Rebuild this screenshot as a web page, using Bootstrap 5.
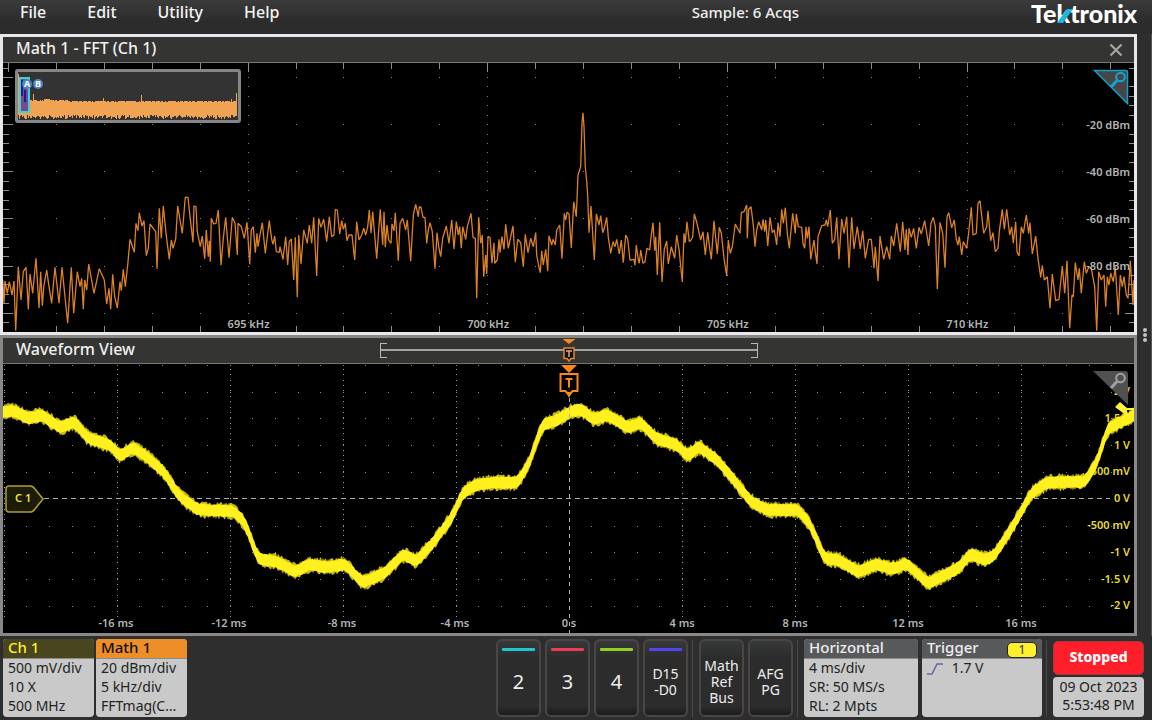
<!DOCTYPE html>
<html lang="en">
<head>
<meta charset="utf-8">
<meta name="viewport" content="width=device-width, initial-scale=1">
<title>Oscilloscope</title>
<link href="https://cdn.jsdelivr.net/npm/bootstrap@5.3.0/dist/css/bootstrap.min.css" rel="stylesheet">
<style>
body{background:#2e2e2e;color:#f0f0f0;font-family:"Noto Sans","Open Sans",sans-serif;font-size:15px;line-height:20px}
button{font-family:inherit}
.topbar{height:34px;background:linear-gradient(#3b3b3b,#2c2c2c 60%);padding:2px 15px 0 20px}
.menu-item{background:none;border:0;padding:0;color:#f4f4f4;font-weight:500;font-size:16px}
.acq{font-size:15px;font-weight:500;margin-right:232px}
.logo{width:106px;height:26px;overflow:visible}
.pane{border:3px solid #8a8786;background:#000;flex:1 1 0;min-height:0}
.pane.active{border-color:#e9e7ec}
.pane-head{height:26px;background:#343433;border-bottom:1px solid #77777a;padding:0 11px 3px 13px}
.pane-title{font-size:16px;font-weight:500}
.pane-close{background:none;border:0;padding:3px 0 0;line-height:0}
.plot{min-height:0;overflow:hidden}
.plot svg.fill-plot{position:absolute;inset:0;width:100%;height:100%}
.tick-label{position:absolute;font-size:11px;line-height:14px;font-weight:600;color:#b4b4b4;white-space:nowrap}
.x-tick{transform:translateX(-50%);bottom:3px}
.fft-x{bottom:1px}
.y-tick{right:4px;transform:translateY(-50%)}
.volt{color:#e6dc32}
.zoom-btn{position:absolute;top:6px;right:5px;width:36px;height:36px;padding:0;border:0;background:none;line-height:0}
.overview{position:absolute;left:12px;top:6px;width:226px;height:54px;border:3px solid #868686;border-radius:3px;background:#333}
.record{width:378px;height:15px;margin-top:3px;border:1px solid #b9b9b5;border-width:0 1px}
.record i{position:absolute;width:6px;height:15px;border:solid #b9b9b5;border-width:1px 0}
.record::after{content:"";position:absolute;left:0;right:0;top:6px;height:2px;background:#a3a39e}
.marker-small{position:absolute;left:50%;top:-4px;transform:translateX(-50%);z-index:2}
.marker-big{position:absolute;left:50%;top:0;transform:translateX(-50%)}
.c1-tag{position:absolute;left:2px;top:50%;transform:translateY(-50%)}
.rail{width:15px;background:#2e2e2e;border-right:1px solid #555;padding-left:2px}
.rail span{width:4px;height:4px;background:#c4c4c4;border-radius:50%}
.bottombar{height:84px;padding:3px 8px 3px 3px}
.info{background:#c9c9c9;color:#222;border-radius:4px;overflow:hidden;font-size:14px;line-height:19px;border:0;padding:0;text-align:left;display:flex;flex-direction:column}
.info-head{height:20px;line-height:17px;font-weight:500;padding:0 5px;width:100%;border-bottom:1px solid #8b8b8b;font-size:15px;flex-shrink:0}
.info-body{padding:0 5px;margin-top:-1px;white-space:nowrap;width:100%;overflow:hidden;text-overflow:ellipsis}
.w-chan{width:91px}.w-hor{width:114px}.w-trig{width:120px}.w-status{width:91px}
.head-ch{background:#48451f;color:#fff02a}
.head-math{background:#ee8e28;color:#111}
.head-gray{background:#58595a;color:#eee}
.scope-btn{width:45px;border:2px solid #4b4643;border-radius:6px;background:linear-gradient(#37393a,#2c2c2c 22%,#2c2c2c 88%,#1c1c1c);color:#eee;padding:7px 0 0;font-size:14px;line-height:16px;position:relative}
.scope-btn b{position:absolute;left:4px;right:4px;top:7px;height:3px;border-radius:1px}
.scope-btn .num{font-size:20px;line-height:22px}
.vsep{width:3px;border-left:1px solid #4c4745;margin-top:1px}
.trig-src{background:#fff02e;color:#333;border:1px solid #222;border-radius:5px;width:30px;height:16px;line-height:13px;font-size:13px;text-align:center;font-weight:400;margin-top:3px}
.stopped{height:34px;background:#ff1f2a;border:1px solid #a3393e;border-radius:5px;color:#fff;font-weight:800;font-size:14px;padding:0 0 2px;margin-top:2px}
.clock{height:40px;background:#c9c9c9;color:#222;border-radius:4px;font-size:14px;line-height:18px;text-align:center;padding-top:1px;white-space:nowrap}
</style>
</head>
<body class="vh-100 d-flex flex-column overflow-hidden">
<header class="topbar d-flex align-items-start flex-shrink-0">
  <nav class="d-flex" style="gap:41px">
    <button class="menu-item">File</button><button class="menu-item">Edit</button><button class="menu-item">Utility</button><button class="menu-item">Help</button>
  </nav>
  <span class="acq ms-auto">Sample: 6 Acqs</span>
  <svg class="logo" viewBox="0 0 106 26" role="img" aria-label="Tektronix">
    <text x="0" y="21" font-family="Lato" font-weight="900" font-size="25" fill="#fff">Tektronix</text>
    <path d="M26 21L36 7H42L32 21Z" fill="#14b8e0"/>
  </svg>
</header>

<div class="d-flex flex-grow-1" style="min-height:0">
<main class="d-flex flex-column flex-grow-1">
  <section class="pane active d-flex flex-column">
    <div class="pane-head d-flex align-items-center justify-content-between">
      <span class="pane-title">Math 1 - FFT (Ch 1)</span>
      <button class="pane-close" aria-label="Close"><svg width="14" height="14"><path d="M1.500 1.500L12.500 12.500M12.500 1.500L1.500 12.500" stroke="#a6a6a6" stroke-width="2.200"/></svg></button>
    </div>
    <div class="plot position-relative flex-grow-1" id="fft">
      <svg class="fill-plot" viewBox="3 63 1131 269" preserveAspectRatio="none"><g id="fftGrid"></g><path id="fftTrace" fill="none" stroke="#dc8225" stroke-width="1.300" stroke-linejoin="bevel"/></svg>
      <div class="overview"><svg class="d-block" width="220" height="48" id="mini"></svg></div>
      <button class="zoom-btn" aria-label="Zoom spectrum"><svg width="36" height="36"><path d="M1.500 1.500H33Q34.500 1.500 34.500 3V34.500Z" fill="#464646" stroke="#149fca" stroke-width="1.500"/><circle cx="27.500" cy="8" r="4.300" fill="none" stroke="#14a5d2" stroke-width="2"/><path d="M24 11.500L18 18" stroke="#14a5d2" stroke-width="3"/></svg></button>
    </div>
  </section>
  <section class="pane d-flex flex-column">
    <div class="pane-head d-flex align-items-center px-0">
      <span class="pane-title flex-fill w-25" style="padding-left:13px">Waveform View</span>
      <div class="record position-relative"><i style="left:0"></i><i style="right:0"></i>
        <svg class="marker-small" width="13" height="24"><path d="M0 0H13L6.500 5Z" fill="#f7891f"/><path d="M1.500 9H11.500V19.500H8.500L6.500 22L4.500 19.500H1.500Z" fill="#111" stroke="#e8842a" stroke-width="1.500"/><path d="M3.500 12H9.500M6.500 12V18" stroke="#d9a878" stroke-width="1.500"/></svg>
      </div>
      <span class="flex-fill w-25"></span>
    </div>
    <div class="plot position-relative flex-grow-1" id="wave">
      <svg class="fill-plot" viewBox="3 364 1131 269" preserveAspectRatio="none"><g id="waveGrid"></g></svg>
      <div id="voltLabels"></div>
      <svg class="fill-plot" viewBox="3 364 1131 269" preserveAspectRatio="none"><path id="waveEdge" fill="#c4b90c"/><path id="waveCore" fill="#fff01e"/><path d="M569.500 398V633" stroke="#aaa" stroke-dasharray="4 4"/><path d="M1115 407L1120 402L1127 408H1134V410H1127V416Z" fill="#fff23a"/></svg>
      <svg class="marker-big" width="20" height="36"><path d="M2 1H18L10 9Z" fill="#f7891f"/><path d="M1.500 10H18.500V27H13.500L10 31L6.500 27H1.500Z" fill="#000" stroke="#f7891f" stroke-width="2"/><path d="M7 28H13L10 34Z" fill="#f7891f"/><path d="M6.500 15H13.500M10 15V23.500" stroke="#f7891f" stroke-width="2"/></svg>
      <svg class="c1-tag" width="40" height="30"><path d="M4 2H25Q28 2 30 5L38 15L30 25Q28 28 25 28H4Q1 28 1 25V5Q1 2 4 2Z" fill="#1c1b08" stroke="#a9a32e" stroke-width="1.500"/><text x="10" y="18" font-size="11" font-weight="600" fill="#f0e53a">C 1</text></svg>
      <button class="zoom-btn" aria-label="Zoom waveform"><svg width="36" height="36"><path d="M0 1H32Q35 1 35 4V35Z" fill="#505050"/><circle cx="27.500" cy="8" r="4.300" fill="none" stroke="#a2a2a2" stroke-width="2"/><path d="M24 11.500L18 18" stroke="#a2a2a2" stroke-width="3"/></svg></button>
    </div>
  </section>
</main>
<aside class="rail d-flex flex-column align-items-center justify-content-center" style="gap:1px"><span></span><span></span><span></span></aside>
</div>

<footer class="bottombar d-flex flex-shrink-0">
  <div class="d-flex" style="gap:2px">
    <button class="info w-chan"><span class="info-head head-ch">Ch 1</span><span class="info-body">500 mV/div<br>10 X<br>500 MHz</span></button>
    <button class="info w-chan"><span class="info-head head-math">Math 1</span><span class="info-body">20 dBm/div<br>5 kHz/div<br>FFTmag(C…</span></button>
  </div>
  <div class="d-flex gap-1 ms-auto">
    <button class="scope-btn"><b style="background:#1fc8cf"></b><span class="num">2</span></button>
    <button class="scope-btn"><b style="background:#ee3b5a"></b><span class="num">3</span></button>
    <button class="scope-btn"><b style="background:#93d120"></b><span class="num">4</span></button>
    <button class="scope-btn"><b style="background:#5244f0"></b>D15<br>-D0</button>
    <span class="vsep"></span>
    <button class="scope-btn">Math<br>Ref<br>Bus</button>
    <button class="scope-btn">AFG<br>PG</button>
    <span class="vsep"></span>
    <button class="info w-hor"><span class="info-head head-gray">Horizontal</span><span class="info-body">4 ms/div<br>SR: 50 MS/s<br>RL: 2 Mpts</span></button>
    <button class="info w-trig"><span class="info-head head-gray d-flex justify-content-between">Trigger<span class="trig-src">1</span></span><span class="info-body"><svg width="17" height="14" class="me-1"><path d="M0 12H5L10 2H16" fill="none" stroke="#6a6796" stroke-width="1.500"/></svg> 1.7 V</span></button>
    <span class="vsep"></span>
    <div class="w-status d-flex flex-column justify-content-between"><button class="stopped">Stopped</button><div class="clock">09 Oct 2023<br>5:53:48 PM</div></div>
  </div>
</footer>

<script src="https://cdn.jsdelivr.net/npm/bootstrap@5.3.0/dist/js/bootstrap.bundle.min.js"></script>
<script>
const $=id=>document.getElementById(id);
let seed=7;const rnd=()=>(seed=(seed*16807)%2147483647)/2147483647;

// Samples are stored per third of the sweep, three units to a plot unit.
const parse=(s,ox,oy)=>s.trim().split(/\s+/).map(p=>{const[a,b]=p.split(',');return[ox+a/3,oy+b/3]});

const fftPts=[
...parse(`8,300 12,370 15,303 22,340 28,305 36,345 42,303 47,452 55,260 63,360 70,275 78,262 85,388 90,282 98,340 108,235 117,384 122,275 127,377 132,315 140,270 147,320 155,370 165,262 177,370 186,262 203,430 214,262 221,400 232,275 240,320 245,295 250,388 254,300 260,330 266,252 282,340 298,266 313,300 320,372 327,325 332,388 338,283 344,350 352,384 360,305 364,332 370,268 376,320 383,255 390,178 403,217 408,130 414,152 418,98 426,138 432,122 439,227 445,205 450,132 467,155 471,266 478,85 484,175 490,78 498,160 508,238 514,180 519,205 527,178 533,78 540,120 547,160 556,52 564,52 570,110 579,187 582,78 588,80 592,155 601,200 607,168 614,236 619,150 625,230 628,182 631,245 634,115 641,132 648,130 655,90 663,256 670,175 677,112 687,233 697,112 705,130 712,225 714,130 724,140 733,175 741,127 749,253 754,150 760,140 766,218 771,160 774,200 781,160 787,128 796,220 808,122 815,178 819,193 824,168 829,215 838,217 840,200 849,238 857,170 863,255 868,185 874,177 881,300 886,172 892,352 896,165 903,252 911,150 922,190 928,135 935,190 941,112 950,288 956,115 963,142 971,118 980,185 988,110 995,170 1002,165 1006,88 1012,90 1019,162 1025,122 1030,148 1036,130 1041,182 1047,165 1056,165 1064,240 1070,125 1077,180 1085,165 1091,145 1097,165 1103,140 1108,90 1113,160 1118,95 1130,236 1136,150 1141,88 1148,195`,0,180),
...parse(`0,95 4,202 9,135 14,180 21,190 24,132 30,152 34,98 43,242 48,130 56,115 65,150 70,120 80,244 88,105 95,73 103,110 106,80 111,82 117,112 123,112 128,190 133,150 138,128 145,155 153,266 159,158 164,200 170,230 176,175 187,138 195,190 203,120 210,207 217,125 223,165 227,140 232,205 236,140 245,178 250,140 261,100 267,172 274,175 278,355 284,112 290,190 295,165 299,290 305,225 308,282 312,170 318,172 324,250 330,188 332,250 340,240 345,178 348,218 354,170 360,208 365,133 373,205 387,138 394,247 401,178 410,188 418,260 424,163 432,218 440,175 448,200 455,158 458,225 464,258 469,278 473,212 478,255 485,208 491,274 495,167 503,195 507,178 514,195 518,150 527,135 534,236 541,100 545,120 549,97 555,102 562,204 569,65 577,110 582,-15 590,-40 594,-170 597,-202 600,-160 604,-40 609,15 611,50 615,158 621,78 631,240 637,102 645,135 650,107 656,158 661,145 668,112 673,172 680,220 687,185 693,200 698,178 706,222 712,180 718,248 725,165 731,178 738,240 750,238 753,256 757,195 763,240 766,250 770,210 777,250 783,245 789,205 797,210 800,180 807,128 812,212 815,170 820,285 827,127 834,306 841,208 848,183 853,252 862,200 872,235 878,165 885,208 895,306 900,160 904,188 909,125 916,185 921,180 926,170 931,102 939,130 950,180 957,155 964,225 971,157 977,205 982,238 990,122 1000,222 1006,142 1012,160 1020,235 1028,288 1033,180 1039,220 1045,200 1054,132 1068,160 1072,98 1080,95 1088,75 1090,175 1094,88 1101,80 1108,135 1113,200 1118,150 1124,125 1133,150 1137,118 1142,155 1145,120 1151,198`,384,180),
...parse(`0,190 6,112 13,158 19,150 26,195 30,128 36,170 41,88 46,130 52,83 58,160 64,205 74,100 82,160 85,102 91,140 101,142 105,190 110,205 114,140 118,175 123,140 128,238 138,180 142,215 147,252 150,170 161,137 171,135 175,120 179,140 187,90 193,190 200,178 206,112 213,238 221,117 228,160 236,110 243,263 251,112 258,207 268,140 277,207 284,152 292,235 302,178 310,178 318,265 322,200 330,303 336,168 347,238 356,200 365,238 370,168 377,198 386,130 397,215 404,125 411,210 415,148 420,225 423,145 430,172 437,145 445,205 453,142 460,162 470,122 482,198 489,130 496,112 502,140 508,328 516,127 524,160 531,263 537,110 542,98 551,143 559,120 565,178 570,195 574,170 581,225 586,185 596,205 603,150 610,82 615,165 625,160 630,70 636,62 647,160 656,140 660,92 668,182 675,158 682,215 690,205 694,155 703,88 709,148 716,88 725,165 731,140 736,190 743,125 747,215 753,228 760,140 766,160 775,105 782,160 786,128 793,222 803,168 810,235 818,292 823,257 829,300 838,290 846,385 853,282 863,362 873,358 883,258 890,340 897,242 905,445 912,345 916,350 922,248 930,300 934,265 940,340 949,245 955,280 962,262 970,265 980,320 986,452 992,275 1000,300 1008,285 1013,380 1018,290 1023,315 1028,280 1036,305 1042,260 1051,405 1057,285 1063,320 1068,290 1075,345 1080,355 1087,242 1095,375 1098,300`,768,180)];
$('fftTrace').setAttribute('d','M'+fftPts.map(p=>p[0].toFixed(1)+' '+p[1].toFixed(1)).join('L'));

// Spectrum graticule
let ticks='',dots='';
for(let k=-5;k<=18;k++){
  const x=Math.round(247.600+47.930*k)+.5, major=k%5===0;
  ticks+=`M${x} 63V${major?72:69}`;
  if(!major) ticks+=`M${x} 326V332`;
  for(let r=0;r<27;r++) if((major&&k>=0)||r%5===0) dots+=`M${x-.5} ${Math.round(77+9.430*r)+.5}h1`;
}
for(let r=-1;r<28;r++){
  const y=Math.round(77+9.430*r)+.5, m=r%5===0;
  ticks+=`M3 ${y}H${m?13:9}`;
  if(!m||r===25) ticks+=`M${m?1125:1129} ${y}H1134`;
}
$('fftGrid').innerHTML=`<path d="${ticks}" stroke="#8c8c8c"/><path d="${dots}" stroke="#808080"/>`;

// Waveform graticule
let wd='',wm='';
for(let k=-25;k<=25;k++){
  const x=Math.round(568.800+22.600*k)+.5, major=k%5===0&&k!==0;
  wd+=`M${x-.5} 365.500h1`;
  if(major) for(let y=369;y<620;y+=5.370) wm+=`M${x-.5} ${Math.round(y)+.5}h1`;
  if(k) for(let r=0;r<9;r++) if(r!==4) wd+=`M${x-.5} ${Math.round(391.600+26.800*r)+.5}h1`;
}
$('waveGrid').innerHTML=`<path d="${wd}" stroke="#888"/><path d="${wm}" stroke="#999"/><path d="M44 498.500H1110" stroke="#aaa" stroke-dasharray="5 4"/>`;

// Channel 1 centre line, thickened with noise
const c=[
...parse(`8,155 40,152 85,175 125,165 180,203 222,185 265,235 330,255 360,288 400,262 440,290 490,335 540,410 590,447 640,452 700,453 735,490 775,597 835,607 885,635 930,613 980,622 1035,613 1088,668`,0,360),
...parse(`0,730 60,672 95,695 150,635 205,560 235,490 275,465 330,458 400,458 435,400 475,285 520,270 560,245 590,238 630,268 670,255 735,293 770,277 815,325 880,345 910,378 945,350 1000,390 1050,450 1100,515`,384,330),
...parse(`0,540 90,540 125,580 170,685 210,690 270,725 325,703 375,717 415,700 480,760 570,715 608,672 650,690 680,675 740,580 790,490 840,457 950,455 985,400 1020,295 1060,275 1100,255`,768,330)];
const at=x=>{let i=1;while(i<c.length-1&&c[i][0]<x)i++;const[a,b]=[c[i-1],c[i]];return a[1]+(b[1]-a[1])*Math.min(1,Math.max(0,(x-a[0])/(b[0]-a[0])))};
const mid=x=>{let s=0;for(let d=-3;d<=3;d++)s+=at(x+d);return s/7};
const band=(h,n)=>{const u=[],l=[];for(let x=3;x<=1134;x+=1){const m=mid(x);u.push(`${x} ${(m-h-rnd()*n).toFixed(1)}`);l.unshift(`${x} ${(m+h+rnd()*n).toFixed(1)}`)}return'M'+u.join('L')+'L'+l.join('L')+'Z'};
$('waveEdge').setAttribute('d',band(5,4));
$('waveCore').setAttribute('d',band(5,1.500));

// Axis labels, placed by value
const lab=(cls,txt,prop,v)=>`<span class="tick-label ${cls}" style="${prop}:${v.toFixed(2)}%">${txt}</span>`;
const px=x=>(x-3)/11.310;
let f='';
[695,700,705,710].forEach((k,i)=>f+=lab('x-tick fft-x',k+' kHz','left',px(248.500+239.600*i)));
[-20,-40,-60,-80].forEach((d,i)=>f+=lab('y-tick',d+' dBm','top',(62+47*i)/2.690));
$('fft').insertAdjacentHTML('beforeend',f);
let w='';
for(let k=-4;k<=4;k++) w+=lab('x-tick',k?4*k+' ms':'0 s','left',px(569+113*k-(k<0?1:0)));
$('wave').insertAdjacentHTML('beforeend',w);
$('voltLabels').innerHTML=['2 V','1.5 V','1 V','500 mV','0 V','-500 mV','-1 V','-1.5 V','-2 V'].map((t,i)=>lab('y-tick volt',t,'top',(27+26.800*i)/2.690)).join('');

// Full-span overview strip
let top_=[];
for(let x=1;x<219;x++){
  let y=29+(x<50?-1:0)+(rnd()<.3?1:0);
  if(x===15)y=22; if(x>25&&x<32)y=27; if(x===85)y=26; if(x===123)y=23; if(x===213)y=27; if(x===218)y=21;
  top_.push(`${x+.5} ${y}V${Math.round(43+rnd()*4)}`);
}
$('mini').innerHTML=`<path d="${top_.map(t=>'M'+t).join('')}" stroke="#f0a352" stroke-width="1"/><path d="M.5 2V43" stroke="#f0a352"/><rect x="2" y="6" width="9" height="34" fill="#74499a" stroke="#3fd2d0" stroke-width="2"/><path d="M4 8V24M7 18V30" stroke="#201a86" stroke-width="2"/><circle cx="9" cy="12" r="5" fill="#4a86cc"/><circle cx="20" cy="12" r="5" fill="#4a86cc"/><g fill="#fff" font-size="9" font-weight="700" text-anchor="middle"><text x="9" y="15">A</text><text x="20" y="15">B</text></g>`;
</script>
</body>
</html>
